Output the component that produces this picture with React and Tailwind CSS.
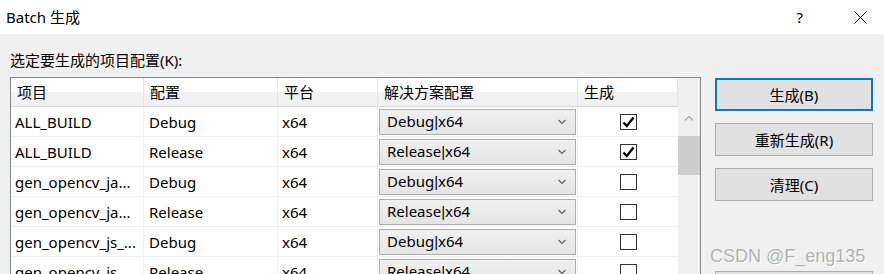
import React from 'react'

const rows = [
    { name: 'ALL_BUILD', config: 'Debug', sol: 'Debug', build: true },
    { name: 'ALL_BUILD', config: 'Release', sol: 'Release', build: true },
    { name: 'gen_opencv_ja...', config: 'Debug', sol: 'Debug', build: false },
    { name: 'gen_opencv_ja...', config: 'Release', sol: 'Release', build: false },
    { name: 'gen_opencv_js_...', config: 'Debug', sol: 'Debug', build: false },
    { name: 'gen_opencv_js...', config: 'Release', sol: 'Release', build: false },
]

const cols = 'grid grid-cols-[133px_134px_100px_200px_100px]'

function Chevron({ up, className }) {
    return (
        <svg width="10" height="6" viewBox="0 0 10 6" className={className}>
            <polyline
                points={up ? '1,5.5 5,1.5 9,5.5' : '1.5,1 5,4.5 8.5,1'}
                fill="none"
                stroke="currentColor"
                strokeWidth="1.2"
            />
        </svg>
    )
}

function CheckBox({ checked }) {
    return (
        <div className="w-[17px] h-[16px] border border-[#333333] bg-white flex items-center justify-center">
            {checked && (
                <svg width="13" height="12" viewBox="0 0 13 12">
                    <path d="M1.5 6.5 L4.8 10 L11.5 1.5" fill="none" stroke="#000" strokeWidth="2.4" />
                </svg>
            )}
        </div>
    )
}

function Button({ children, primary }) {
    return (
        <button
            className={
                'w-[158px] h-[33px] bg-[#e1e1e1] text-[15px] text-black flex items-center justify-center ' +
                (primary ? 'border-2 border-[#0078d7]' : 'border border-[#adadad]')
            }
        >
            {children}
        </button>
    )
}

export default function App() {
    return (
        <div
            className="w-[884px] h-[274px] overflow-hidden flex flex-col text-black text-[15px] leading-[20px]"
            style={{ fontFamily: '"Noto Sans", "Noto Sans CJK SC", sans-serif' }}
        >
            {/* Title bar */}
            <div className="h-[34px] bg-white flex items-center pl-[6px] shrink-0">
                <span>Batch 生成</span>
                <span className="ml-auto mr-[51px]">?</span>
                <svg width="13" height="13" viewBox="0 0 13 13" className="mr-[17px]">
                    <path d="M0.5 0.5 L12.5 12.5 M12.5 0.5 L0.5 12.5" stroke="#000" strokeWidth="1" />
                </svg>
            </div>

            {/* Body */}
            <div className="flex-1 bg-[#f0f0f0] flex pl-[10px] relative">
                <div className="flex flex-col pt-[16px]">
                    <div className="h-[20px]">选定要生成的项目配置(K):</div>
                    <div className="mt-[7px] w-[691px] border border-[#828790] bg-white flex">
                        <div className="w-[667px]">
                            {/* Header */}
                            <div className={cols + ' h-[29px] border-b border-[#d5d5d5] bg-gradient-to-b from-white from-50% to-[#f1f2f4] to-50%'}>
                                {['项目', '配置', '平台', '解决方案配置', '生成'].map((h) => (
                                    <div key={h} className="border-r border-[#e3e5e8] pl-[6px] flex items-center">
                                        {h}
                                    </div>
                                ))}
                            </div>
                            {/* Rows */}
                            {rows.map((r, i) => (
                                <div key={i} className={cols + ' h-[30px] border-b border-[#f0f0f0]'}>
                                    <div className="border-r border-[#f0f0f0] pl-[4px] flex items-center whitespace-nowrap">{r.name}</div>
                                    <div className="border-r border-[#f0f0f0] pl-[5px] flex items-center">{r.config}</div>
                                    <div className="border-r border-[#f0f0f0] pl-[4px] flex items-center">x64</div>
                                    <div className="border-r border-[#f0f0f0] pl-[1px] flex items-center">
                                        <div className="w-[197px] h-[26px] border border-[#adadad] bg-gradient-to-b from-[#f0f0f0] to-[#e5e5e5] flex items-center pl-[7px] pr-[8px]">
                                            <span className="whitespace-nowrap">
                                                {r.sol}
                                                <span style={{ fontFamily: '"Liberation Sans", sans-serif' }}>|</span>
                                                x64
                                            </span>
                                            <Chevron className="ml-auto text-[#606060]" />
                                        </div>
                                    </div>
                                    <div className="flex items-center justify-center">
                                        <CheckBox checked={r.build} />
                                    </div>
                                </div>
                            ))}
                        </div>
                        {/* Scrollbar */}
                        <div className="w-[22px] bg-[#f0f0f0] flex flex-col items-center pt-[37px]">
                            <Chevron up className="text-[#a3a3a3]" />
                            <div className="mt-[15px] w-full h-[39px] bg-[#cdcdcd]" />
                        </div>
                    </div>
                </div>

                <div className="ml-[14px] pt-[44px] flex flex-col gap-[12px]">
                    <Button primary>生成(B)</Button>
                    <Button>重新生成(R)</Button>
                    <Button>清理(C)</Button>
                    <div className="mt-[58px]">
                        <Button>关闭</Button>
                    </div>
                </div>

                <div
                    className="absolute left-[710px] top-[210px] text-[18px] leading-[24px] text-[#b0b0b0] whitespace-nowrap"
                    style={{ fontFamily: '"Liberation Sans", sans-serif', textShadow: '0 0 1px #fff, 1px 1px 0 #fff' }}
                >
                    CSDN @F_eng135
                </div>
            </div>
        </div>
    )
}
